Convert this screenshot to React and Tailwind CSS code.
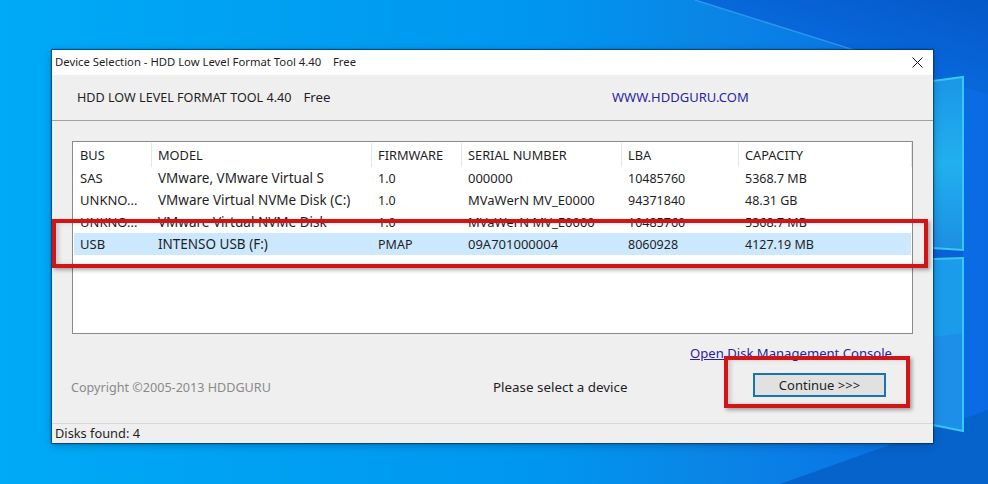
const columns = ["w-[78px]", "w-[220px]", "w-[90px]", "w-[160px]", "w-[117px]", "w-[173px]"];
const cellSizes = ["text-[13px]", "text-[13.5px]", "text-[12.5px]", "text-[13px]", "text-[12.5px]", "text-[12.5px]"];
const headers = ["BUS", "MODEL", "FIRMWARE", "SERIAL NUMBER", "LBA", "CAPACITY"];
const disks = [
  ["SAS", "VMware, VMware Virtual S", "1.0", "000000", "10485760", "5368.7 MB"],
  ["UNKNO...", "VMware Virtual NVMe Disk (C:)", "1.0", "MVaWerN MV_E0000", "94371840", "48.31 GB"],
  ["UNKNO...", "VMware Virtual NVMe Disk", "1.0", "MVaWerN MV_E0000", "10485760", "5368.7 MB"],
];
const usb = ["USB", "INTENSO USB (F:)", "PMAP", "09A701000004", "8060928", "4127.19 MB"];

function Row({ cells, selected }) {
  return (
    <div className={"flex items-baseline h-[22px] pt-px w-[837px] " + (selected ? "bg-[#cce8ff]" : "")}>
      {cells.map((text, i) => (
        <div key={i} className={columns[i] + " " + cellSizes[i] + " shrink-0 pl-[6px] leading-[20px] whitespace-nowrap"}>{text}</div>
      ))}
    </div>
  );
}

function HeaderRow() {
  return (
    <div className="flex h-[24px]">
      {headers.map((text, i) => (
        <div key={i} className={columns[i] + " shrink-0 pl-[6px] border-r border-[#e6e6e6] text-[12.8px] leading-[24px] whitespace-nowrap"}>{text}</div>
      ))}
    </div>
  );
}

function Wallpaper() {
  return (
    <svg className="absolute inset-0" width="988" height="484" viewBox="0 0 988 484">
      <defs>
        <linearGradient id="wall" x1="0" y1="0" x2="1" y2="0">
          <stop offset="0" stopColor="#00aaf6" />
          <stop offset="0.55" stopColor="#0096f0" />
          <stop offset="0.72" stopColor="#0a85e6" />
          <stop offset="1" stopColor="#0a6ae4" />
        </linearGradient>
        <linearGradient id="corner" x1="0" y1="1" x2="1" y2="0">
          <stop offset="0" stopColor="#0a78ec" />
          <stop offset="1" stopColor="#0558c8" />
        </linearGradient>
        <linearGradient id="pane" x1="0" y1="0" x2="0" y2="1">
          <stop offset="0" stopColor="#1a96e6" />
          <stop offset="0.5" stopColor="#22b0ee" />
          <stop offset="1" stopColor="#1c8ee2" />
        </linearGradient>
      </defs>
      <rect width="988" height="484" fill="url(#wall)" />
      <path d="M695 0H988V95Z" fill="url(#corner)" />
      <path d="M695 0L860 52" stroke="#3aa8f5" strokeWidth="1.5" opacity="0.7" />
      <path d="M780 484L988 410V484Z" fill="#0663cc" />
      <path d="M933 250H963V258H933Z" fill="#0a60d8" />
      <path d="M933 81L963 77V250L933 248Z" fill="url(#pane)" />
      <path d="M933 259L963 258V431L933 425Z" fill="#1e8fe8" />
      <path d="M933 337L963 333V258L933 259Z" fill="#1a9cea" />
      <path d="M933 81L963 77V250L933 248M933 259L963 258V431L933 425" stroke="#38c8f5" strokeWidth="2" fill="none" />
    </svg>
  );
}

function Callout({ className }) {
  return <div className={"absolute border-[4px] border-[#d01518] shadow-[2px_2px_4px_rgba(0,0,0,0.35),inset_3px_0_4px_rgba(0,0,0,0.15)] " + className} />;
}

export default function App() {
  return (
    <div className="relative w-[988px] h-[484px] overflow-hidden pl-[52px] pt-[50px] font-['Noto_Sans',sans-serif] text-[12.8px] text-[#1f1f1f]">
      <Wallpaper />
      <div className="relative w-[881px] h-[393px] flex flex-col bg-[#efefef] shadow-[0_0_1px_1px_rgba(0,40,80,0.6),0_2px_8px_rgba(0,30,70,0.35)]">
        <div className="h-[25px] shrink-0 bg-white flex items-center justify-between pl-[3px] pr-[10px] text-[11.3px]">
          <span className="whitespace-pre">Device Selection - HDD Low Level Format Tool 4.40    Free</span>
          <svg width="11" height="11" viewBox="0 0 11 11" stroke="#111" strokeWidth="1" fill="none"><path d="M0.5 0.5L10.5 10.5M10.5 0.5L0.5 10.5" /></svg>
        </div>
        <div className="h-[46px] shrink-0 grid grid-cols-[535px_1fr] items-baseline border-b border-[#a0a0a0] pl-[25px] pt-[13px] leading-[18px]">
          <div className="flex items-baseline gap-[12px] whitespace-nowrap">
            <span className="text-[12.6px]">HDD LOW LEVEL FORMAT TOOL 4.40</span>
            <span className="text-[13.3px]">Free</span>
          </div>
          <span className="text-[13px] text-[#2a1fa8]">WWW.HDDGURU.COM</span>
        </div>
        <div className="mt-[20px] mx-[20px] h-[193px] shrink-0 border border-[#8a8a8a] bg-white pt-px pl-px">
          <HeaderRow />
          {disks.map((d, i) => (
            <Row key={i} cells={d} />
          ))}
          <Row cells={usb} selected />
        </div>
        <div className="flex-1 flex flex-col pt-[10px]">
          <div className="h-[18px] flex justify-end pr-[41px]">
            <a className="text-[13.1px] leading-[18px] text-[#2a1fa8] underline whitespace-nowrap">Open Disk Management Console</a>
          </div>
          <div className="mt-[10px] pl-[19px] grid grid-cols-[422px_260px_133px] items-center">
            <div className="mt-[7px] text-[12.6px] text-[#8a8a8a] whitespace-nowrap">Copyright ©2005-2013 HDDGURU</div>
            <div className="mt-[5px] text-[13.4px] whitespace-nowrap">Please select a device</div>
            <button className="h-[24px] pt-px border-2 border-[#1a74b4] bg-[#e1e1e1] text-[13px] leading-none">Continue &gt;&gt;&gt;</button>
          </div>
        </div>
        <div className="h-[20px] shrink-0 border-t border-[#d9d9d9] pl-[3px] flex items-center">Disks found: 4</div>
      </div>
      <Callout className="left-[52px] top-[219px] w-[876px] h-[49px]" />
      <Callout className="left-[724px] top-[356px] w-[186px] h-[52px]" />
    </div>
  );
}
